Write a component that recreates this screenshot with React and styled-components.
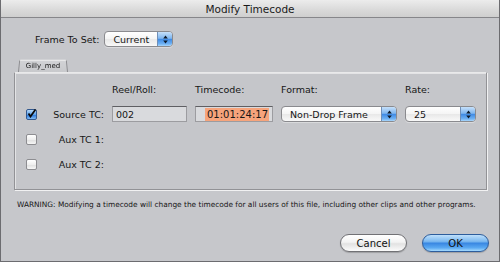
import React from 'react';
import styled, { createGlobalStyle } from 'styled-components';

const GlobalStyle = createGlobalStyle`
    body {
        margin: 0;
        background: #c6c7cb;
        font-family: "DejaVu Sans", Verdana, sans-serif;
    }
`;

const StyledWindow = styled.div`
    width: 500px;
    height: 262px;
    box-sizing: border-box;
    border: 1px solid #6c6c70;
    border-top: none;
    background: #c6c7cb;
    display: flex;
    flex-direction: column;
    color: #161616;
`;

const StyledTitleBar = styled.div`
    height: 17px;
    flex-shrink: 0;
    border-bottom: 1px solid #86868a;
    background: linear-gradient(#ececec, #d9d9d9 60%, #cfcfcf);
    display: flex;
    align-items: center;
    justify-content: center;
    font-size: 10.5px;
    color: #1a1a1a;
`;

const StyledFrameRow = styled.div`
    display: flex;
    align-items: center;
    gap: 5px;
    margin: 13px 0 0 34px;
    font-size: 9.5px;
`;

const StyledPopup = styled.div`
    width: ${props => props.width}px;
    height: 16px;
    box-sizing: border-box;
    border: 1px solid #8a8a8e;
    border-radius: 4px;
    background: linear-gradient(#ffffff, #f4f4f4 50%, #e8e8e8 51%, #f8f8f8);
    display: flex;
    align-items: stretch;
    overflow: hidden;
    box-shadow: 0 1px 0 rgba(255, 255, 255, 0.35);
`;

const StyledPopupText = styled.span`
    flex: 1;
    display: flex;
    align-items: center;
    padding-left: ${props => props.pad || 8}px;
    font-size: 9.5px;
`;

const StyledPopupArrows = styled.span`
    width: 14px;
    border-left: 1px solid #6f8fb8;
    background: linear-gradient(#c6e0fa, #7fb6ef 45%, #3f8ae4 52%, #6fb2f4 85%, #a9d6fb);
    display: flex;
    align-items: center;
    justify-content: center;
`;

const StyledTabArea = styled.div`
    margin: 12px 12px 0 13px;
    display: flex;
    flex-direction: column;
`;

const StyledTab = styled.div`
    position: relative;
    align-self: flex-start;
    margin-left: 4px;
    width: 50px;
    height: 13px;
    display: flex;
    align-items: center;
    justify-content: center;
    font-size: 7px;
    z-index: 1;

    &::before {
        content: '';
        position: absolute;
        inset: 0;
        border: 1px solid #8c8c90;
        border-bottom: none;
        border-top-color: #f2f2f2;
        background: linear-gradient(#d2d3d6, #c8c9cc);
        transform: perspective(30px) rotateX(7deg);
        transform-origin: bottom;
        z-index: -1;
    }
`;

const StyledPanel = styled.div`
    height: 118px;
    box-sizing: border-box;
    border: 1px solid #929296;
    border-top-color: #e9e9ea;
    box-shadow: inset 1px 1px 0 #e3e3e5, 1px 1px 0 #f1f1f2;
    background: #c5c6ca;
    padding: 8px 0 0 11px;
`;

const StyledGrid = styled.div`
    display: grid;
    grid-template-columns: 11px 59px 75px 78px 116px 71px;
    grid-template-rows: repeat(4, 16px);
    column-gap: 8px;
    row-gap: 9px;
    align-items: center;
    font-size: 9.5px;
`;

const StyledHeader = styled.span`
    grid-column: ${props => props.col};
`;

const StyledRowLabel = styled.span`
    text-align: right;
    white-space: nowrap;
`;

const StyledCheckbox = styled.span`
    width: 11px;
    height: 11px;
    box-sizing: border-box;
    border-radius: 2px;
    border: 1px solid ${props => (props.checked ? '#33598f' : '#8d8d91')};
    background: ${props =>
        props.checked
            ? 'linear-gradient(#b6d8f8, #5ea4ee 50%, #2c78dc 55%, #7dbaf5)'
            : 'linear-gradient(#ffffff, #efefef 50%, #e0e0e0 55%, #f6f6f6)'};
    display: flex;
    align-items: center;
    justify-content: center;
`;

const StyledField = styled.div`
    height: 16px;
    box-sizing: border-box;
    border: 1px solid #9c9ca0;
    border-top-color: #5f5f63;
    background: #d9dadd;
    display: flex;
    align-items: center;
    justify-content: ${props => (props.right ? 'flex-end' : 'flex-start')};
    padding: 0 3px;
    font-size: ${props => (props.right ? 10 : 9.5)}px;
`;

const StyledHighlight = styled.span`
    background: #f6a47c;
    padding: 1px 1px 1px 2px;
`;

const StyledWarning = styled.div`
    margin: 10px 0 0 16px;
    font-size: 7.4px;
    white-space: nowrap;
`;

const StyledButtonRow = styled.div`
    margin-top: auto;
    margin-bottom: 9px;
    padding-right: 10px;
    display: flex;
    justify-content: flex-end;
    gap: 15px;
`;

const StyledButton = styled.button`
    width: ${props => props.width}px;
    height: 18px;
    border-radius: 9px;
    border: 1px solid ${props => (props.primary ? '#2d5d9c' : '#717175')};
    background: ${props =>
        props.primary
            ? 'linear-gradient(#bfe0fb, #7bb8f0 40%, #3a88e2 52%, #5aa9f2 80%, #a6dafd)'
            : 'linear-gradient(#ffffff, #f3f3f3 45%, #e2e2e2 55%, #fbfbfb)'};
    font-family: "DejaVu Sans", Verdana, sans-serif;
    font-size: 10px;
    color: #111;
    padding: 0;
    box-shadow: 0 1px 1px rgba(0, 0, 0, 0.2);
`;

function Arrows() {
    return (
        <svg width="5" height="9" viewBox="0 0 5 9">
            <path d="M2.5 0.5 L4.8 3.5 L0.2 3.5 Z M2.5 8.5 L4.8 5.5 L0.2 5.5 Z" fill="#0d1a2a" />
        </svg>
    );
}

function Check() {
    return (
        <svg width="9" height="9" viewBox="0 0 9 9" style={{ marginTop: -2 }}>
            <path d="M1.5 4.5 L3.5 7.5 L8.5 0.5" stroke="#0a0a0a" strokeWidth="1.8" fill="none" />
        </svg>
    );
}

function Popup({ width, label, pad }) {
    return (
        <StyledPopup width={width}>
            <StyledPopupText pad={pad}>{label}</StyledPopupText>
            <StyledPopupArrows><Arrows /></StyledPopupArrows>
        </StyledPopup>
    );
}

const rows = [
    { label: 'Source TC:', checked: true, source: true },
    { label: 'Aux TC 1:', checked: false },
    { label: 'Aux TC 2:', checked: false },
];

export default function App() {
    return (
        <>
            <GlobalStyle />
            <StyledWindow>
                <StyledTitleBar>Modify Timecode</StyledTitleBar>
                <StyledFrameRow>
                    <span>Frame To Set:</span>
                    <Popup width={69} label="Current" />
                </StyledFrameRow>
                <StyledTabArea>
                    <StyledTab>Gilly_med</StyledTab>
                    <StyledPanel>
                        <StyledGrid>
                            <StyledHeader col={3}>Reel/Roll:</StyledHeader>
                            <StyledHeader col={4}>Timecode:</StyledHeader>
                            <StyledHeader col={5}>Format:</StyledHeader>
                            <StyledHeader col={6}>Rate:</StyledHeader>
                            {rows.map(row => (
                                <React.Fragment key={row.label}>
                                    <StyledCheckbox checked={row.checked}>
                                        {row.checked && <Check />}
                                    </StyledCheckbox>
                                    <StyledRowLabel>{row.label}</StyledRowLabel>
                                    {row.source && (
                                        <>
                                            <StyledField>002</StyledField>
                                            <StyledField right>
                                                <StyledHighlight>01:01:24:17</StyledHighlight>
                                            </StyledField>
                                            <Popup width={116} label="Non-Drop Frame" />
                                            <Popup width={71} label="25" />
                                        </>
                                    )}
                                    {!row.source && <span style={{ gridColumn: '3 / 7' }} />}
                                </React.Fragment>
                            ))}
                        </StyledGrid>
                    </StyledPanel>
                </StyledTabArea>
                <StyledWarning>
                    WARNING: Modifying a timecode will change the timecode for all users of this file, including other clips and other programs.
                </StyledWarning>
                <StyledButtonRow>
                    <StyledButton width={67}>Cancel</StyledButton>
                    <StyledButton width={67} primary>OK</StyledButton>
                </StyledButtonRow>
            </StyledWindow>
        </>
    );
}
